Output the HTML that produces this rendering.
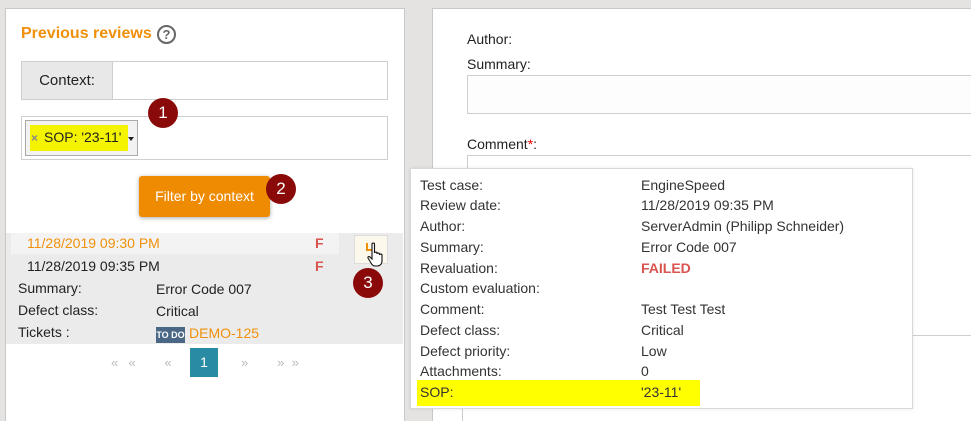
<!DOCTYPE html>
<html style="width:971px;height:421px;overflow:hidden"><head><meta charset="utf-8"><style>
*{box-sizing:border-box;margin:0;padding:0}
body{width:971px;height:421px;background:#e4e3e1;position:relative;overflow:hidden;font-family:"Liberation Sans",Arial,sans-serif;font-size:14px;color:#222}
.a{position:absolute}
.badge{position:absolute;width:30px;height:30px;border-radius:50%;background:#8a0a0a;color:#fff;font-size:17px;text-align:center;line-height:30px}
.tr{position:absolute;left:420px;width:480px;height:20px;font-size:14px;color:#333}
.tr span{position:absolute;left:0;top:2px}
.tr b{position:absolute;left:221px;top:2px;font-weight:normal}
</style></head><body>
<!-- left panel -->
<div class="a" style="left:5px;top:8px;width:400px;height:420px;background:#fff;border:1px solid #c8c8c8;border-bottom:none"></div>
<div class="a" style="left:21px;top:25px;color:#f0900a;font-weight:bold;font-size:16px">Previous reviews</div>
<div class="a" style="left:157px;top:25px;width:19px;height:19px;border:2px solid #666;border-radius:50%;color:#666;font-size:13px;font-weight:bold;text-align:center;line-height:15px">?</div>
<div class="a" style="left:21px;top:61px;width:367px;height:39px;border:1px solid #cfcfcf;background:#fff"></div>
<div class="a" style="left:22px;top:62px;width:91px;height:37px;background:#e8e8e8;border-right:1px solid #cfcfcf;font-size:15px;text-align:center;line-height:37px">Context:</div>
<div class="a" style="left:21px;top:116px;width:367px;height:44px;border:1px solid #cfcfcf;background:#fff"></div>
<div class="a" style="left:25px;top:120px;width:113px;height:36px;border:1px solid #aaa;background:#f2f2f2"></div>
<div class="a" style="left:30px;top:125px;width:98px;height:26px;background:#f4f400"></div>
<div class="a" style="left:31px;top:131px;font-size:12px;color:#888;font-weight:bold">×</div>
<div class="a" style="left:44px;top:129px;font-size:14px">SOP: '23-11'</div>
<div class="a" style="left:128px;top:137px;width:0;height:0;border-left:3px solid transparent;border-right:3px solid transparent;border-top:4px solid #222"></div>
<div class="badge" style="left:148px;top:98px">1</div>
<div class="a" style="left:139px;top:176px;width:131px;height:41px;background:#ee8b00;border-radius:3px;color:#fff;font-size:14px;text-align:center;line-height:41px;box-shadow:0 1px 4px rgba(0,0,0,.35)">Filter by context</div>
<div class="badge" style="left:266px;top:174px">2</div>
<!-- list -->
<div class="a" style="left:6px;top:233px;width:397px;height:111px;background:#ebebeb"></div>
<div class="a" style="left:11px;top:233px;width:328px;height:21px;background:#f3f3f3"></div>
<div class="a" style="left:27px;top:235px;color:#f0900a">11/28/2019 09:30 PM</div>
<div class="a" style="left:315px;top:235px;color:#d9534f;font-weight:bold">F</div>
<div class="a" style="left:27px;top:258px">11/28/2019 09:35 PM</div>
<div class="a" style="left:315px;top:258px;color:#d9534f;font-weight:bold">F</div>
<div class="a" style="left:354px;top:235px;width:34px;height:29px;background:#fdf8ec;border:1px solid #ddd"></div>
<div class="a" style="left:366px;top:243px;width:8px;height:8px;border:2px solid #f0900a;border-top:none"></div>
<svg class="a" style="left:367px;top:242px" width="22" height="26" viewBox="0 0 22 26"><path d="M5 2c0-1.2 2.5-1.2 2.5 0v9c0-1.2 2.5-1.2 2.5 0v1c0-1.2 2.5-1.2 2.5 0v1c0-1.2 2.5-1.2 2.5 0v6c0 3-2 5-5 5H8c-2 0-3-1-4-3l-3-5c-.6-1.2 1-2 2-1l2 2z" fill="#fff" stroke="#111" stroke-width="1.1"/></svg>
<div class="badge" style="left:353px;top:268px">3</div>
<div class="a" style="left:18px;top:280px">Summary:</div><div class="a" style="left:156px;top:281px">Error Code 007</div>
<div class="a" style="left:18px;top:302px">Defect class:</div><div class="a" style="left:156px;top:303px">Critical</div>
<div class="a" style="left:18px;top:324px">Tickets :</div>
<div class="a" style="left:156px;top:327px;width:29px;height:16px;background:#4a6785;color:#fff;font-size:9px;font-weight:bold;text-align:center;line-height:16px">TO DO</div>
<div class="a" style="left:189px;top:325px;color:#f0900a">DEMO-125</div>
<div class="a" style="left:111px;top:355px;color:#bbb;font-size:13px;letter-spacing:1px">« &nbsp;«&nbsp; &nbsp; &nbsp; «</div>
<div class="a" style="left:190px;top:348px;width:28px;height:29px;background:#2a8ca4;color:#fff;text-align:center;line-height:29px">1</div>
<div class="a" style="left:241px;top:355px;color:#bbb;font-size:13px">» &nbsp; &nbsp; &nbsp; &nbsp;» &nbsp;»</div>
<!-- right panel -->
<div class="a" style="left:432px;top:8px;width:545px;height:420px;background:#fff;border:1px solid #c8c8c8;border-bottom:none"></div>
<div class="a" style="left:467px;top:31px">Author:</div>
<div class="a" style="left:467px;top:56px">Summary:</div>
<div class="a" style="left:467px;top:75px;width:510px;height:39px;border:1px solid #cfcfcf;background:#fdfdfd"></div>
<div class="a" style="left:467px;top:136px">Comment<span style="color:#e00">*</span>:</div>
<div class="a" style="left:467px;top:155px;width:510px;height:181px;border:1px solid #cfcfcf"></div>
<div class="a" style="left:462px;top:408px;width:1px;height:20px;background:#ccc"></div>
<!-- tooltip -->
<div class="a" style="left:410px;top:168px;width:503px;height:241px;background:#fff;border:1px solid #d8d8d8;box-shadow:0 0 3px rgba(0,0,0,.1)"></div>
<div class="a" style="left:417px;top:380px;width:283px;height:26px;background:#ffff00"></div>
<div class="tr" style="top:175px"><span>Test case:</span><b>EngineSpeed</b></div>
<div class="tr" style="top:195px"><span>Review date:</span><b>11/28/2019 09:35 PM</b></div>
<div class="tr" style="top:216px"><span>Author:</span><b>ServerAdmin (Philipp Schneider)</b></div>
<div class="tr" style="top:237px"><span>Summary:</span><b>Error Code 007</b></div>
<div class="tr" style="top:258px"><span>Revaluation:</span><b style="color:#d9534f;font-weight:bold">FAILED</b></div>
<div class="tr" style="top:278px"><span>Custom evaluation:</span></div>
<div class="tr" style="top:299px"><span>Comment:</span><b>Test Test Test</b></div>
<div class="tr" style="top:320px"><span>Defect class:</span><b>Critical</b></div>
<div class="tr" style="top:341px"><span>Defect priority:</span><b>Low</b></div>
<div class="tr" style="top:361px"><span>Attachments:</span><b>0</b></div>
<div class="tr" style="top:382px"><span>SOP:</span><b>'23-11'</b></div>
</body></html>
